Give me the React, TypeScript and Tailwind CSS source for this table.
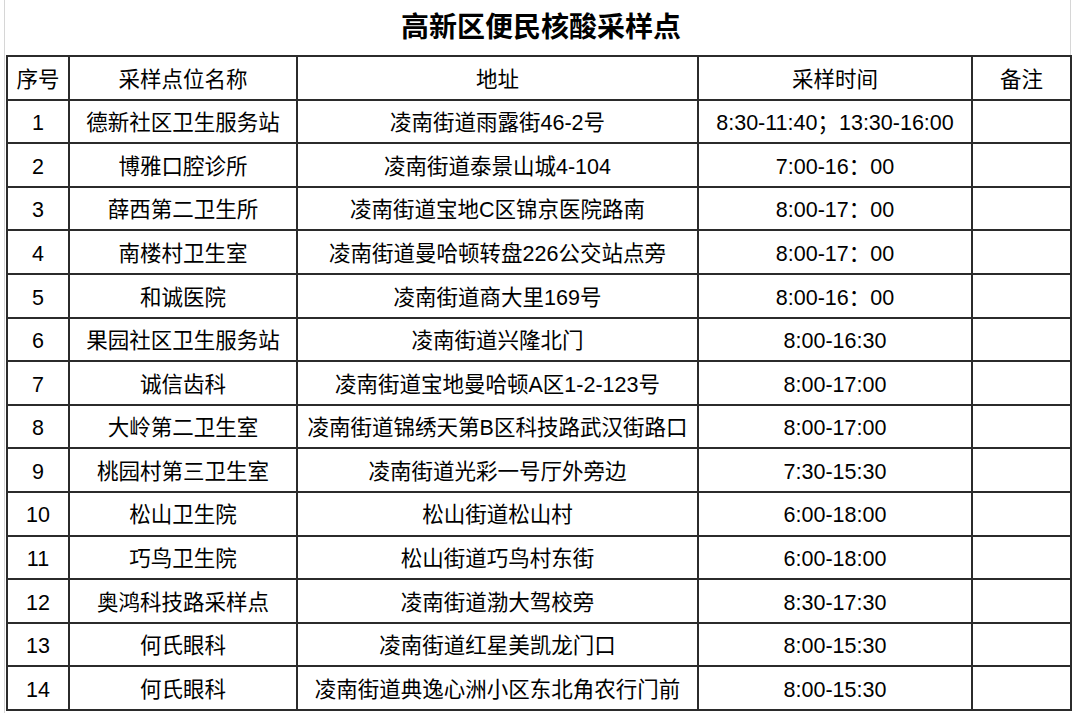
import React from "react";

interface Site {
	name: string;
	address: string;
	time: string;
}

const sites: Site[] = [
	{ name: "德新社区卫生服务站", address: "凌南街道雨露街46-2号", time: "8:30-11:40；13:30-16:00" },
	{ name: "博雅口腔诊所", address: "凌南街道泰景山城4-104", time: "7:00-16：00" },
	{ name: "薛西第二卫生所", address: "凌南街道宝地C区锦京医院路南", time: "8:00-17：00" },
	{ name: "南楼村卫生室", address: "凌南街道曼哈顿转盘226公交站点旁", time: "8:00-17：00" },
	{ name: "和诚医院", address: "凌南街道商大里169号", time: "8:00-16：00" },
	{ name: "果园社区卫生服务站", address: "凌南街道兴隆北门", time: "8:00-16:30" },
	{ name: "诚信齿科", address: "凌南街道宝地曼哈顿A区1-2-123号", time: "8:00-17:00" },
	{ name: "大岭第二卫生室", address: "凌南街道锦绣天第B区科技路武汉街路口", time: "8:00-17:00" },
	{ name: "桃园村第三卫生室", address: "凌南街道光彩一号厅外旁边", time: "7:30-15:30" },
	{ name: "松山卫生院", address: "松山街道松山村", time: "6:00-18:00" },
	{ name: "巧鸟卫生院", address: "松山街道巧鸟村东街", time: "6:00-18:00" },
	{ name: "奥鸿科技路采样点", address: "凌南街道渤大驾校旁", time: "8:30-17:30" },
	{ name: "何氏眼科", address: "凌南街道红星美凯龙门口", time: "8:00-15:30" },
	{ name: "何氏眼科", address: "凌南街道典逸心洲小区东北角农行门前", time: "8:00-15:30" },
];

const cell = "border-2 border-[#2b2b2b] text-center align-middle p-0 pt-[5px] whitespace-nowrap";

export default function App() {
	return (
		<div className="w-[1076px] h-[713px] bg-white overflow-hidden text-black font-[family-name:'Liberation_Sans','Noto_Sans_CJK_SC',sans-serif]">
			<div className="ml-[4px] h-full border-l border-[#d6d6d6] pl-[1px]">
				<div className="w-[1065px] h-[55px] flex items-center justify-center border-r border-[#d6d6d6]">
					<h1 className="text-[28px] font-bold leading-none pl-[6px] pt-[1px]">高新区便民核酸采样点</h1>
				</div>
				<table className="table-fixed border-collapse w-[1064px] text-[21.5px] leading-none">
					<colgroup>
						<col className="w-[62px]" />
						<col className="w-[228px]" />
						<col className="w-[401px]" />
						<col className="w-[274px]" />
						<col className="w-[99px]" />
					</colgroup>
					<thead>
						<tr className="h-[43.6px]">
							<th className={`${cell} font-normal`}>序号</th>
							<th className={`${cell} font-normal`}>采样点位名称</th>
							<th className={`${cell} font-normal`}>地址</th>
							<th className={`${cell} font-normal`}>采样时间</th>
							<th className={`${cell} font-normal`}>备注</th>
						</tr>
					</thead>
					<tbody>
						{sites.map((s, i) => (
							<tr key={i} className="h-[43.6px]">
								<td className={cell}>{i + 1}</td>
								<td className={cell}>{s.name}</td>
								<td className={cell}>{s.address}</td>
								<td className={cell}>{s.time}</td>
								<td className={cell}></td>
							</tr>
						))}
					</tbody>
				</table>
			</div>
		</div>
	);
}
